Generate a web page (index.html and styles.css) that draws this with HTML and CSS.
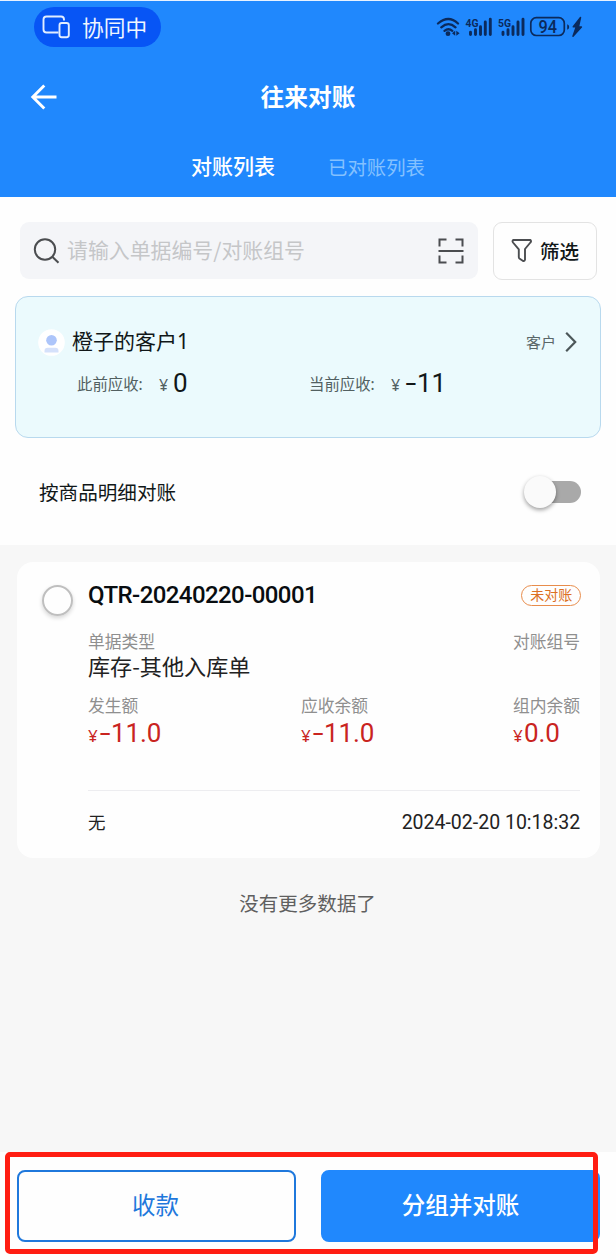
FILE: index.html
```html
<!DOCTYPE html>
<html lang="zh-CN">
<head>
<meta charset="utf-8">
<title>往来对账</title>
<link rel="stylesheet" href="styles.css">
</head>
<body>
<div class="app">
  <header class="header">
    <div class="status-bar">
      <div class="pill">
        <svg width="28" height="24" viewBox="0 0 28 24" fill="none" stroke="#e2edff" stroke-width="1.9">
          <path d="M16.500 17.500H4.500Q1.500 17.500 1.500 14.500V4.500Q1.500 1.500 4.500 1.500H19Q22 1.500 22 4.500V5.500"/>
          <rect x="17.500" y="8" width="9.300" height="14.300" rx="2.200"/>
        </svg>
        <span class="pill-text">协同中</span>
      </div>
      <svg class="indicators" width="148" height="24" viewBox="0 0 148 24" fill="none" stroke="#0b2a5c" stroke-width="2.300" stroke-linecap="round">
        <path d="M2 8.500Q12.500-.500 22 8.500M5.300 12.300Q12.500 6 19.500 12.300M8.500 15.800Q12.500 12.700 16.300 15.800"/>
        <g fill="#0b2a5c" stroke="none">
          <circle cx="12" cy="18.700" r="2.400"/>
          <path d="M19.200 15.800v5l-3.200-2.500zM20.300 15.800v5l3.300-2.500z"/>
          <text class="net" x="29.500" y="12" textLength="13" lengthAdjust="spacingAndGlyphs">4G</text>
          <text class="net" x="62" y="12" textLength="13" lengthAdjust="spacingAndGlyphs">5G</text>
          <text class="battery-text" x="102.500" y="18.200" textLength="18.500" lengthAdjust="spacingAndGlyphs">94</text>
          <path d="M137.500 9.300v5.400q2-.5 2-2.700t-2-2.700z" transform="translate(-6.300 0)"/>
          <path d="M144.500 2.500l-7.200 9.300h3l-3.300 9.400 8.400-9.200h-3z" stroke="#0b2a5c" stroke-width="1.500" stroke-linejoin="round"/>
        </g>
        <path stroke-width="2.900" d="M34.500 17.300v2.200M39.500 14.800v4.700M44.500 11.800v7.700M49.300 7v12.500M54.300 4.200v15.300M67 17.300v2.200M72 14.800v4.700M77 11.800v7.700M82 7v12.500M87 4.200v15.300"/>
        <rect x="94.800" y="2.700" width="33.500" height="17.800" rx="5.500" stroke-width="1.700"/>
      </svg>
    </div>
    <div class="title-bar">
      <svg class="back" width="28" height="28" viewBox="0 0 28 28" fill="none" stroke="#fff" stroke-width="2.900"><path d="M26.500 14H3M14.300 2.500L2.800 14l11.500 11.500"/></svg>
      <h1 class="title">往来对账</h1>
    </div>
    <nav class="tabs">
      <span class="tab tab-active">对账列表</span>
      <span class="tab">已对账列表</span>
    </nav>
  </header>

  <section class="top-panel">
    <div class="search-row">
      <div class="search">
        <svg width="28" height="28" viewBox="0 0 28 28" fill="none" stroke="#4b4d50" stroke-width="2"><circle cx="12" cy="12.500" r="10.200"/><path d="M19.300 19.800l6.200 6"/></svg>
        <span class="placeholder">请输入单据编号/对账组号</span>
        <svg class="scan" width="28" height="28" viewBox="0 0 28 28" fill="none" stroke="#4b4d50" stroke-width="2"><path d="M2.500 9.500V2.500h7M18.500 2.500h7v7M25.500 18.500v7h-7M9.500 25.500h-7v-7M1.500 14h25"/></svg>
      </div>
      <div class="filter">
        <svg width="22" height="26" viewBox="0 0 22 26" fill="none" stroke="#4b4d50" stroke-width="1.900" stroke-linejoin="round"><path d="M2.200 2h17.200q1.200 1.200 0 2.500L14 11v10.800q-.5 1.600-1.900 1.200L8.400 20.500q-.6-.5-.6-1.500v-7.700L2 4.500Q1 3.200 2.200 2z"/></svg>
        <span class="filter-text">筛选</span>
      </div>
    </div>

    <div class="customer">
      <div class="customer-head">
        <svg width="27" height="27" viewBox="0 0 27 27"><circle cx="13.500" cy="13.500" r="13.300" fill="#fff"/><circle cx="13.500" cy="11.300" r="5.300" fill="#adc5fa"/><path d="M6.500 23.500v-1.500q0-3.300 3.300-3.300h7.400q3.300 0 3.300 3.300v1.500z" fill="#d5e1fb"/></svg>
        <span class="customer-name">橙子的客户1</span>
        <span class="customer-kind">客户</span>
        <svg width="14" height="22" viewBox="0 0 14 22" fill="none" stroke="#4c5759" stroke-width="2.200"><path d="M2.200 1.800l9 9.200-9 9.200"/></svg>
      </div>
      <div class="customer-sums">
        <div class="sum"><span class="sum-label">此前应收:</span><span class="sum-cur">¥</span><span class="sum-value">0</span></div>
        <div class="sum"><span class="sum-label">当前应收:</span><span class="sum-cur">¥</span><span class="sum-value"><span class="minus">-</span>11</span></div>
      </div>
    </div>

    <div class="toggle-row">
      <span class="toggle-label">按商品明细对账</span>
      <div class="switch"><div class="thumb"></div></div>
    </div>
  </section>

  <main class="list">
    <article class="doc">
      <div class="check"></div>
      <div class="doc-body">
        <div class="doc-head">
          <h2 class="doc-no">QTR-20240220-00001</h2>
          <span class="badge">未对账</span>
        </div>
        <div class="doc-type">
          <div class="field"><span class="label">单据类型</span><span class="type-value">库存-其他入库单</span></div>
          <div class="field"><span class="label">对账组号</span></div>
        </div>
        <div class="amounts">
          <div class="field"><span class="label">发生额</span><span class="money"><small class="yen">¥</small><span class="minus">-</span>11.0</span></div>
          <div class="field"><span class="label">应收余额</span><span class="money"><small class="yen">¥</small><span class="minus">-</span>11.0</span></div>
          <div class="field"><span class="label">组内余额</span><span class="money"><small class="yen">¥</small>0.0</span></div>
        </div>
        <div class="doc-foot"><span class="note">无</span><time class="date">2024-02-20 10:18:32</time></div>
      </div>
    </article>
    <p class="end">没有更多数据了</p>
  </main>

  <footer class="footer">
    <div class="btn btn-outline">收款</div>
    <div class="btn btn-primary">分组并对账</div>
    <div class="highlight"></div>
  </footer>
</div>
</body>
</html>
```
FILE: styles.css
```css
* { box-sizing: border-box; }
body { margin: 0; background: #fefefe; font-family: "Noto Sans", "Noto Sans CJK SC", sans-serif; color: #111718; }
svg { display: block; flex: none; }
h1, h2, p { margin: 0; }
span, time { white-space: nowrap; }
.app { width: 616px; height: 1260px; display: flex; flex-direction: column; overflow: hidden; }

.header { height: 197px; border-top: 1px solid #e8f2ff; background: #2088fd; flex: none; color: #fff; }
.status-bar { height: 52px; display: flex; justify-content: space-between; padding: 6px 32px 0 34px; }
.pill { width: 127px; height: 40px; border-radius: 20px; background: #0755f5; display: flex; align-items: center; padding-left: 8px; gap: 12px; }
.pill-text { font: 21.7px/30px "Noto Sans CJK SC", sans-serif; color: #f0f6ff; }
.indicators { margin-top: 8px; }
.net { font: bold 10.500px "Roboto", sans-serif; }
.battery-text { font: 500 18.500px "Roboto", sans-serif; }
.title-bar { height: 84px; display: grid; grid-template-columns: 30px 1fr 30px; align-items: center; padding: 2px 30px 0 30px; }
.title { font: bold 23.700px/34px "Noto Sans CJK SC", sans-serif; text-align: center; }
.back { margin-top: 2px; }
.tabs { display: flex; padding: 10px 0 0 191px; gap: 53px; align-items: center; }
.tab { font: 19.400px/30px "Noto Sans CJK SC", sans-serif; color: #84c1ff; margin-top: 5px; }
.tab-active { font-size: 21px; font-weight: 500; color: #fff; margin-top: 0; }

.top-panel { height: 348px; flex: none; padding: 25px 15px 0; background: #fefefe; }
.search-row { display: flex; gap: 15px; padding-left: 5px; }
.search { width: 458px; height: 57px; border-radius: 9px; background: #f4f5f8; display: flex; align-items: center; padding: 0 13px 0 13px; }
.placeholder { flex: 1; margin: -3px 0 0 6px; font: 20.900px/30px "Noto Sans CJK SC", sans-serif; color: #c5c6c8; }
.filter { width: 104px; height: 58px; border: 1px solid #e3e3e3; border-radius: 9px; display: flex; align-items: center; padding-left: 17px; gap: 7px; }
.filter-text { font: 500 19.500px/30px "Noto Sans CJK SC", sans-serif; }

.customer { width: 586px; height: 142px; margin-top: 16px; border: 1px solid #b8d9ee; border-radius: 13px; background: #ebfafd; padding: 30px 22px 0 22px; }
.customer-head { height: 30px; display: flex; align-items: center; }
.customer-name { flex: 1; margin: -3px 0 0 7px; font: 21px/30px "Noto Sans", "Noto Sans CJK SC", sans-serif; }
.customer-kind { font-size: 15px; color: #5a6769; margin: -2px 8px 0 0; }
.customer-sums { display: grid; grid-template-columns: 232px 1fr; padding-left: 39px; margin-top: 9px; }
.sum { display: flex; align-items: center; height: 34px; }
.sum-label { font-size: 15.400px; width: 82px; color: #526061; }
.sum-cur { font-size: 16px; width: 14px; color: #526061; margin-top: 3px; }
.sum-value { font: 26px/30px "Roboto", sans-serif; }
.toggle-row { display: flex; justify-content: space-between; align-items: center; height: 107px; padding: 0 20px 0 24px; }
.toggle-label { font: 19.600px/30px "Noto Sans CJK SC", sans-serif; }
.switch { width: 57px; height: 22px; border-radius: 11px; background: linear-gradient(90deg, transparent 40%, #a9a9a9 40%); display: flex; align-items: center; }
.thumb { width: 32px; height: 32px; flex: none; border-radius: 50%; background: #fafafa; box-shadow: 0 2px 4px rgba(0,0,0,.38); }

.list { height: 607px; flex: none; background: #f7f7f7; padding: 17px 16px 0 17px; }
.doc { height: 296px; border-radius: 16px; background: #fefefe; display: flex; padding: 17px 20px 0 25px; }
.check { width: 31px; height: 31px; margin: 6px 15px 0 0; flex: none; border: 2px solid #bfbfbf; border-radius: 50%; box-shadow: 0 2px 4px rgba(0,0,0,.16); }
.doc-body { flex: 1; display: flex; flex-direction: column; }
.doc-head { height: 30px; display: flex; align-items: center; justify-content: space-between; }
.doc-no { font: 500 24px/30px "Roboto", sans-serif; letter-spacing: -.58px; color: #080d10; padding-top: 1px; }
.badge { width: 60px; height: 21px; margin: 2px -1px 0 0; border: 1px solid #e88c4b; border-radius: 11px; text-align: center; font: 14px/17px "Noto Sans CJK SC", sans-serif; color: #dc7023; }
.field { display: flex; flex-direction: column; }
.label { font: 16.800px/24px "Noto Sans CJK SC", sans-serif; color: #8f8f8f; }
.doc-type { display: grid; grid-template-columns: 425px 1fr; height: 64px; margin-top: 20px; }
.type-value { font: 22.100px/24px "Noto Sans CJK SC", sans-serif; color: #222; }
.amounts { display: grid; grid-template-columns: 213px 212px 1fr; height: 97px; }
.money { font: 26px/32px "Roboto", sans-serif; letter-spacing: -.1px; color: #c9241f; display: flex; align-items: baseline; }
.yen { font: 17px "Noto Sans", sans-serif; margin-right: 1px; width: 10px; }
.minus { display: inline-block; width: 12px; text-align: center; transform: scaleX(1.5); }
.doc-foot { border-top: 1px solid #ededf0; display: flex; justify-content: space-between; align-items: center; height: 64px; color: #222; }
.note { font-size: 17.500px; margin-top: -2px; }
.date { font: 19.500px/28px "Roboto", sans-serif; }
.end { text-align: center; margin: 30px 0 0 -2px; font: 19.500px/30px "Noto Sans CJK SC", sans-serif; color: #5f5f5f; }

.footer { height: 108px; position: relative; display: flex; gap: 25px; padding: 18px 15px 0 17px; background: #fefefe; }
.btn { height: 72px; border-radius: 8px; font: 23.500px/65px "Noto Sans CJK SC", sans-serif; text-align: center; border: 2px solid #1f78dc; }
.btn-outline { width: 279px; padding-right: 2px; color: #1f78dc; }
.btn-primary { width: 279px; background: #2088fd; border-color: #2088fd; color: #fff; font-weight: 500; }
.highlight { position: absolute; left: 5px; top: 0; width: 593px; height: 102px; border: 5px solid #ff1d12; border-radius: 5px; }
```
